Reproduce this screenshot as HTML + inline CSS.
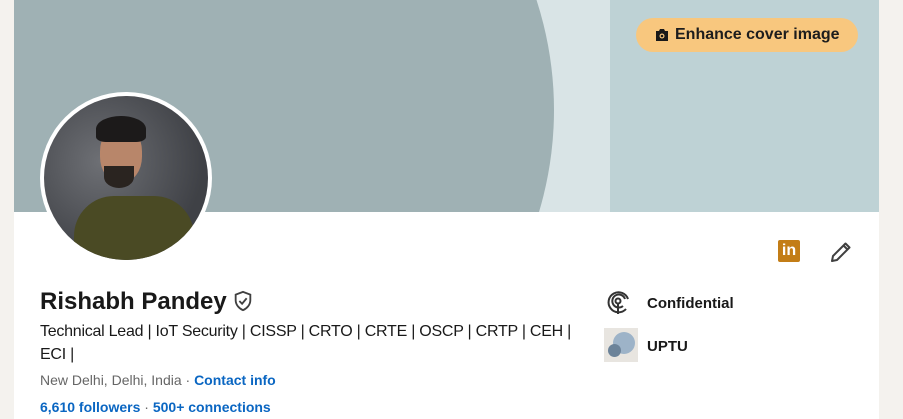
<!DOCTYPE html>
<html><head><style>
body{margin:0;width:903px;height:419px;background:#f4f2ee;font-family:"Liberation Sans",sans-serif;overflow:hidden;position:relative}
.card{position:absolute;left:14px;top:0;width:865px;height:419px;background:#fff;overflow:hidden}
.cover{position:absolute;left:0;top:0;width:865px;height:212px;background:#bed2d5;overflow:hidden}
.t{position:absolute;white-space:nowrap;color:#191919}
</style></head><body>
<div class="card">
<div class="cover">
<div style="position:absolute;left:0;top:0;width:596px;height:212px;background:#d9e4e6"></div>
<div style="position:absolute;left:-560px;top:-330px;width:1100px;height:880px;border-radius:50%;background:#9fb1b4"></div>
<div style="position:absolute;left:622px;top:18px;width:222px;height:34px;border-radius:17px;background:#f8c77e"></div>
<svg style="position:absolute;left:640px;top:27px" width="16" height="16" viewBox="0 0 16 16"><path d="M2 4h3l1-2h4l1 2h3v10H2z" fill="#191919"/><circle cx="8" cy="9" r="2.5" fill="#f8c77e"/><circle cx="8" cy="9" r="1.3" fill="#191919"/></svg>
<div class="t" style="left:661px;top:26px;font-size:16px;font-weight:bold;color:#1d1d1d">Enhance cover image</div>
</div>
<div style="position:absolute;left:26px;top:92px;width:172px;height:172px;border-radius:50%;background:#fff"></div>
<div style="position:absolute;left:30px;top:96px;width:164px;height:164px;border-radius:50%;background:radial-gradient(circle at 35% 40%,#6e7075,#3f4146 70%);overflow:hidden">
<div style="position:absolute;left:30px;top:100px;width:120px;height:80px;border-radius:40px 40px 0 0;background:#4a4a24"></div>
<div style="position:absolute;left:56px;top:30px;width:42px;height:56px;border-radius:45%;background:#b8866a"></div>
<div style="position:absolute;left:52px;top:20px;width:50px;height:26px;border-radius:50% 50% 20% 20%;background:#1c1a1a"></div>
<div style="position:absolute;left:60px;top:70px;width:30px;height:22px;border-radius:0 0 50% 50%;background:#2a2420"></div>
</div>
<div style="position:absolute;left:764px;top:240px;width:22px;height:22px;background:#c37d16;border-radius:2px;color:#fff;font-weight:bold;font-size:16px;line-height:22px;text-align:center;font-family:'Liberation Sans'">in</div>
<svg style="position:absolute;left:815px;top:240px" width="24" height="24" viewBox="0 0 24 24"><path d="M16.5 3.5l4 4L8 20l-5 1 1-5z M14.5 5.5l4 4" fill="none" stroke="#404040" stroke-width="2" stroke-linejoin="round"/></svg>
<div class="t" style="left:26px;top:288px;font-size:24px;font-weight:bold">Rishabh Pandey</div>
<svg style="position:absolute;left:218px;top:290px" width="22" height="22" viewBox="0 0 24 24"><path d="M12 2l8 3v6c0 5-3.5 9-8 11-4.5-2-8-6-8-11V5z" fill="none" stroke="#404040" stroke-width="2"/><path d="M8 12l3 3 5-6" fill="none" stroke="#404040" stroke-width="2"/></svg>
<div class="t" style="left:26px;top:320px;font-size:16px;letter-spacing:-0.25px;line-height:23px;white-space:normal;width:545px">Technical Lead | IoT Security | CISSP | CRTO | CRTE | OSCP | CRTP | CEH | ECI |</div>
<div class="t" style="left:26px;top:372px;font-size:14px;color:#666">New Delhi, Delhi, India · <b style="color:#0a66c2">Contact info</b></div>
<div class="t" style="left:26px;top:399px;font-size:14px;font-weight:bold;color:#0a66c2">6,610 followers <span style="color:#666;font-weight:normal">·</span> 500+ connections</div>
<svg style="position:absolute;left:592px;top:289px" width="26" height="28" viewBox="0 0 26 28"><g fill="none" stroke="#333" stroke-width="2"><path d="M20 20A10 10 0 1 1 22 10"/><path d="M17 17A6.5 6.5 0 1 1 19 10"/><circle cx="12" cy="12" r="2.5"/><path d="M12 15v10"/></g></svg>
<div class="t" style="left:633px;top:295px;font-size:15px;font-weight:bold">Confidential</div>
<div style="position:absolute;left:590px;top:328px;width:34px;height:34px;background:#e8e5e0"></div>
<div style="position:absolute;left:599px;top:332px;width:22px;height:22px;border-radius:50%;background:#9db3c8"></div>
<div style="position:absolute;left:594px;top:344px;width:13px;height:13px;border-radius:50%;background:#6c8399"></div>
<div class="t" style="left:633px;top:338px;font-size:15px;font-weight:bold">UPTU</div>
</div>
</body></html>
